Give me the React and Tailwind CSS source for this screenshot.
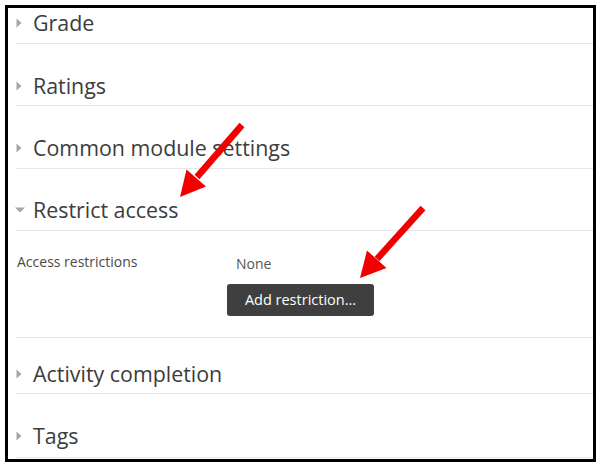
import React from "react";

const font = { fontFamily: '"Open Sans", "Noto Sans", sans-serif' };

function RightTri() {
  return (
    <svg width="6" height="10" viewBox="0 0 6 10" className="block">
      <path d="M0.5 0.5 L5.5 5 L0.5 9.5 Z" fill="#a6a6a6" />
    </svg>
  );
}

function DownTri() {
  return (
    <svg width="10" height="6" viewBox="0 0 10 6" className="block -ml-[1px]">
      <path d="M0 0.5 L10 0.5 L5 5.5 Z" fill="#a6a6a6" />
    </svg>
  );
}

function Header({ title, h, pb, open }) {
  return (
    <div
      className={`flex items-end border-b border-[#e6e6e6] ${h} ${pb}`}
    >
      <div className="flex items-center h-[24px]">
        <div className="w-[17px] flex items-center">
          {open ? <DownTri /> : <RightTri />}
        </div>
        <span className="text-[21.4px] leading-[24px] text-[#3c3c3c] whitespace-nowrap">
          {title}
        </span>
      </div>
    </div>
  );
}

export default function App() {
  return (
    <div className="relative w-[600px] h-[467px] bg-white overflow-hidden" style={font}>
      <div className="pt-[5px] pl-[5px]">
        <div className="w-[591px] h-[457px] border-[3px] border-black overflow-hidden">
          <div className="flex flex-col pl-[8px]">
            <Header title="Grade" h="h-[36px]" pb="pb-[8px]" />
            <Header title="Ratings" h="h-[62px]" pb="pb-[7px]" />
            <Header title="Common module settings" h="h-[63px]" pb="pb-[8px]" />
            <Header title="Restrict access" h="h-[62px]" pb="pb-[8px]" open />
            <div className="h-[107px] border-b border-[#e6e6e6] flex pl-[1px] pt-[21px]">
              <div className="w-[210px] text-[14px] leading-[20px] text-[#4a4a4a]">
                Access restrictions
              </div>
              <div className="flex flex-col items-start pt-[2px]">
                <div className="pl-[9px] text-[14px] leading-[20px] text-[#555]">None</div>
                <button className="mt-[10px] w-[147px] h-[32px] rounded-[3px] bg-[#3f3f3f] text-white text-[14.5px] leading-[20px] flex items-center justify-center">
                  Add restriction...
                </button>
              </div>
            </div>
            <Header title="Activity completion" h="h-[56px]" pb="pb-[7px]" />
            <Header title="Tags" h="h-[64px]" pb="pb-[9px]" />
          </div>
        </div>
      </div>
      <svg
        className="absolute left-0 top-0 pointer-events-none"
        width="600"
        height="467"
        viewBox="0 0 600 467"
      >
        <line x1="242" y1="125" x2="197" y2="177" stroke="#f20000" strokeWidth="6.5" />
        <polygon points="180,197 206,186.5 186.5,169.5" fill="#f20000" />
        <line x1="423" y1="208" x2="377" y2="259" stroke="#f20000" strokeWidth="6.5" />
        <polygon points="360,278 386.5,268 367,250.5" fill="#f20000" />
      </svg>
    </div>
  );
}
